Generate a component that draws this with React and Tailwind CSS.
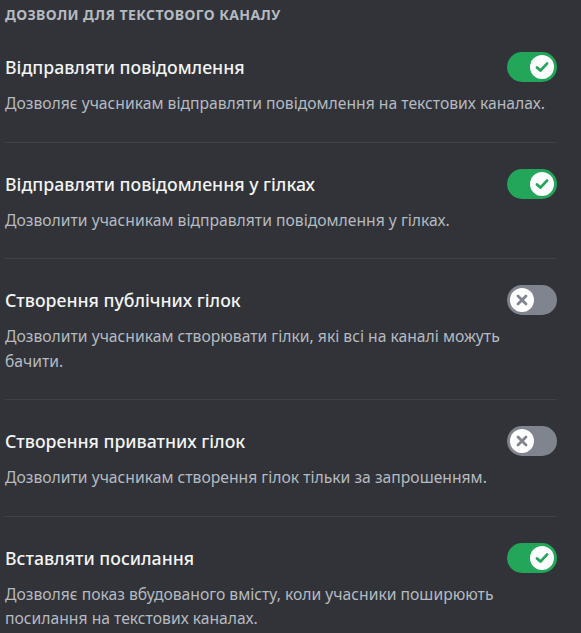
import React from "react";

const items = [
  { title: "Відправляти повідомлення", desc: "Дозволяє учасникам відправляти повідомлення на текстових каналах.", on: true },
  { title: "Відправляти повідомлення у гілках", desc: "Дозволити учасникам відправляти повідомлення у гілках.", on: true },
  { title: "Створення публічних гілок", desc: "Дозволити учасникам створювати гілки, які всі на каналі можуть бачити.", on: false },
  { title: "Створення приватних гілок", desc: "Дозволити учасникам створення гілок тільки за запрошенням.", on: false },
  { title: "Вставляти посилання", desc: "Дозволяє показ вбудованого вмісту, коли учасники поширюють посилання на текстових каналах.", on: true },
];

function Toggle({ on }) {
  return (
    <div
      className={
        "flex h-[30px] w-[50px] shrink-0 items-center rounded-full px-[3px] " +
        (on ? "justify-end bg-[#23a55a]" : "justify-start bg-[#80848e]")
      }
    >
      <div className="flex h-[24px] w-[24px] items-center justify-center rounded-full bg-white">
        {on ? (
          <svg width="18" height="18" viewBox="0 0 18 18" fill="none">
            <path d="M4 9.4 L7.4 12.6 L14 5.6" stroke="#23a55a" strokeWidth="2.8" strokeLinecap="round" strokeLinejoin="round" />
          </svg>
        ) : (
          <svg width="18" height="18" viewBox="0 0 18 18" fill="none">
            <path d="M5 5 L13 13 M13 5 L5 13" stroke="#80848e" strokeWidth="2.8" strokeLinecap="round" />
          </svg>
        )}
      </div>
    </div>
  );
}

export default function App() {
  return (
    <div
      className="min-h-[633px] w-[581px] bg-[#313338] pl-[5px] pr-[24px]"
      style={{ fontFamily: '"Noto Sans", "Open Sans", sans-serif' }}
    >
      <div className="pt-[7px] text-[14px] font-bold uppercase leading-[16px] tracking-[0.4px] text-[#b5bac1]">
        Дозволи для текстового каналу
      </div>
      <div className="pt-[29px]">
        {items.map((it, i) => (
          <div key={i} className={i < items.length - 1 ? "border-b border-[#3f4147] pb-[26px] mb-[26px]" : ""}>
            <div className="flex h-[30px] items-center justify-between">
              <div className="text-[17.7px] font-medium leading-[22px] text-[#f2f3f5]">{it.title}</div>
              <Toggle on={it.on} />
            </div>
            <div className="mt-[9px] text-[15.7px] leading-[24.5px] text-[#b5bac1]">{it.desc}</div>
          </div>
        ))}
      </div>
    </div>
  );
}
